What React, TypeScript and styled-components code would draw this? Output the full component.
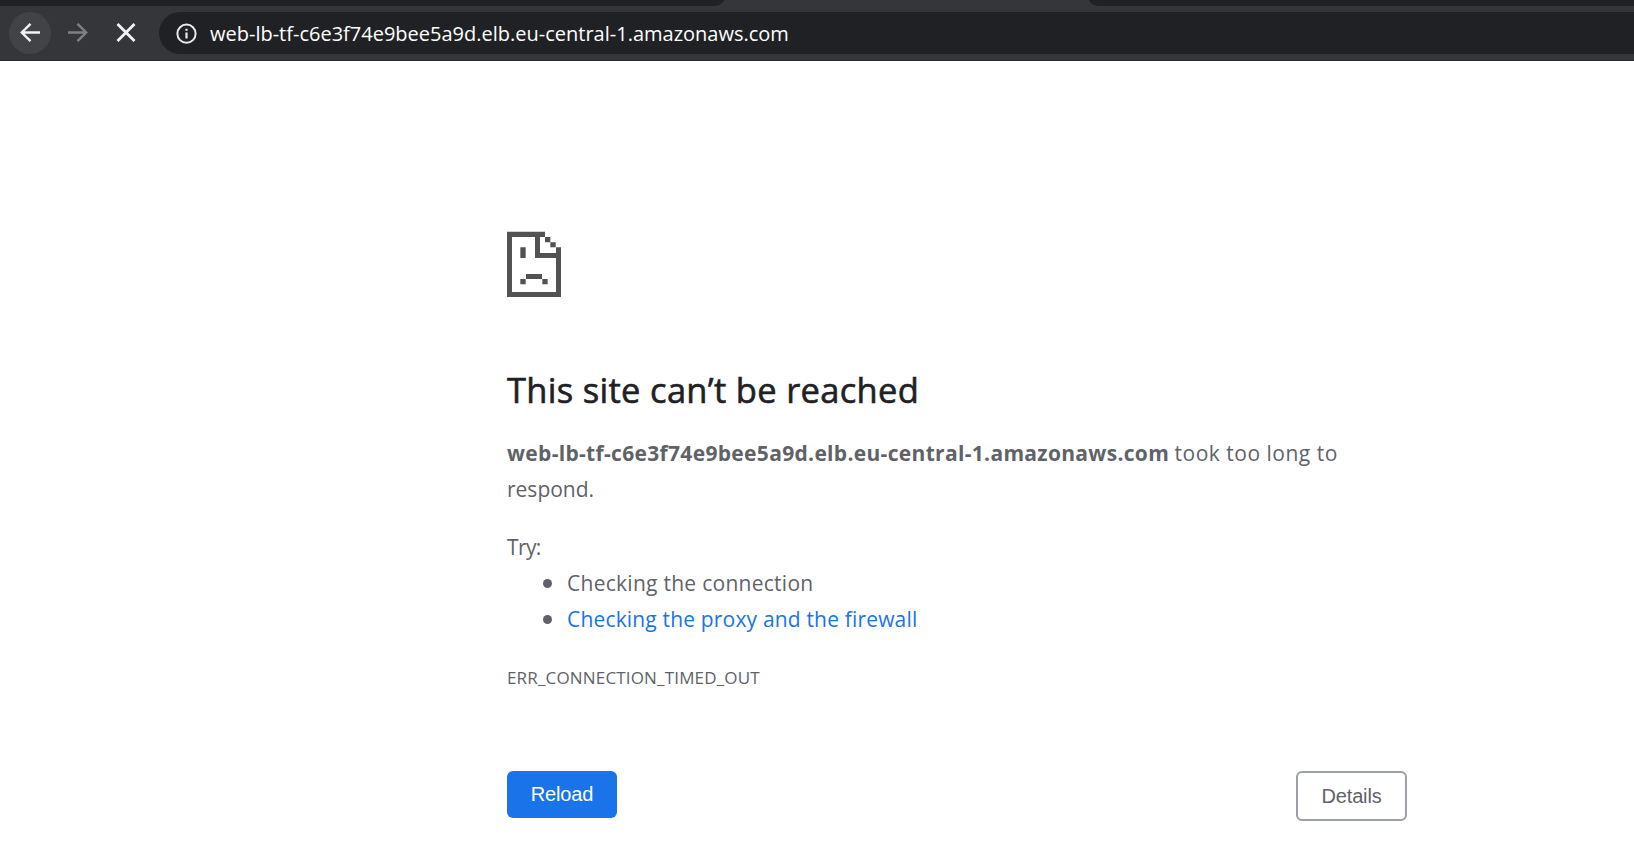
import React from 'react';
import styled, { createGlobalStyle } from 'styled-components';

const GlobalStyle = createGlobalStyle`
  * { box-sizing: border-box; }
  body {
    margin: 0;
    background: #fff;
    color: #5f6368;
    font-family: "Open Sans", "Noto Sans", sans-serif;
    overflow: hidden;
  }
`;

const Browser = styled.div`
  height: 855px;
  display: flex;
  flex-direction: column;
`;

const TabStrip = styled.div`
  height: 6px;
  flex: none;
  display: flex;
  align-items: flex-end;
  justify-content: space-between;
  overflow: hidden;
  background: #35363a;
`;

const TabGroup = styled.div<{ $side: 'left' | 'right'; $width: number }>`
  width: ${(p) => p.$width}px;
  height: 24px;
  background: #202124;
  border-radius: ${(p) => (p.$side === 'left' ? '0 0 12px 0' : '0 0 0 12px')};
`;

const Toolbar = styled.header`
  height: 55px;
  flex: none;
  display: flex;
  align-items: flex-start;
  gap: 6px;
  padding: 6px 0 0 9px;
  background: #35363a;
  border-bottom: 1px solid #28292c;
`;

const NavButton = styled.button<{ $active?: boolean; $dim?: boolean }>`
  width: 42px;
  height: 42px;
  padding: 0;
  border: 0;
  border-radius: 50%;
  background: ${(p) => (p.$active ? '#424347' : 'transparent')};
  color: ${(p) => (p.$dim ? '#7f8083' : '#f1f3f4')};
  svg { display: block; }
`;

const Omnibox = styled.div`
  flex: 1;
  height: 42px;
  margin-left: 6px;
  padding-left: 17px;
  display: flex;
  align-items: center;
  gap: 13px;
  border-radius: 21px 0 0 21px;
  background: #202124;
  color: #fff;
`;

const Address = styled.span`
  padding-top: 2px;
  font-size: 20px;
  line-height: 42px;
  white-space: nowrap;
`;

const ErrorPage = styled.main`
  width: 900px;
  margin-left: 507px;
  padding-top: 170px;
  font-size: 21px;
  line-height: 36px;
`;

const SadPage = styled.svg`
  display: block;
  width: 54px;
  height: 66px;
  fill: #525252;
`;

const Title = styled.h1`
  margin: 69px 0 0;
  color: #202124;
  font-size: 34.5px;
  font-weight: 500;
  line-height: 48px;
  white-space: nowrap;
  -webkit-text-stroke: 0.6px #202124;
`;

const Summary = styled.p`
  margin: 21px 0 0;
  strong { font-weight: 700; }
`;

const Line = styled.span<{ $track?: number }>`
  letter-spacing: ${(p) => p.$track ?? 0}px;
  white-space: nowrap;
`;

const Suggestions = styled.div`
  margin-top: 22px;
`;

const TipList = styled.ul`
  margin: 0;
  padding: 0 0 0 24px;
  list-style: none;
`;

const Tip = styled.li<{ $link?: boolean }>`
  display: flex;
  align-items: center;
  gap: 15px;
  padding-left: 12px;
  height: 36px;
  color: ${(p) => (p.$link ? '#1a73e8' : 'inherit')};
  &::before {
    content: '';
    width: 9px;
    height: 9px;
    border-radius: 50%;
    background: #5f6368;
  }
`;

const ErrorCode = styled.div`
  margin-top: 23px;
  font-size: 17px;
`;

const Actions = styled.div`
  margin-top: 75px;
  display: flex;
  justify-content: space-between;
  align-items: flex-start;
`;

const Button = styled.button<{ $outline?: boolean }>`
  width: ${(p) => (p.$outline ? 111 : 110)}px;
  height: ${(p) => (p.$outline ? 50 : 47)}px;
  padding: ${(p) => (p.$outline ? '0' : '0 0 2px')};
  border: ${(p) => (p.$outline ? '2px solid #9aa0a6' : '0')};
  border-radius: 6px;
  background: ${(p) => (p.$outline ? '#fff' : '#1a73e8')};
  color: ${(p) => (p.$outline ? '#5f6368' : '#fff')};
  font: 20px/30px "Liberation Sans", Arial, sans-serif;
  letter-spacing: -0.15px;
`;

const HOST = 'web-lb-tf-c6e3f74e9bee5a9d.elb.eu-central-1.amazonaws.com';

function Stroke({ d, width = 2.4 }: { d: string; width?: number }) {
  return (
    <svg width="42" height="42" viewBox="0 0 42 42" fill="none" stroke="currentColor" strokeWidth={width}>
      <path d={d} />
    </svg>
  );
}

export default function App() {
  return (
    <Browser>
      <GlobalStyle />
      <TabStrip>
        <TabGroup $side="left" $width={726} />
        <TabGroup $side="right" $width={547} />
      </TabStrip>
      <Toolbar>
        <NavButton $active aria-label="Back">
          <Stroke d="M31 20.5H13M21.5 11.8L12.8 20.5L21.5 29.2" />
        </NavButton>
        <NavButton $dim aria-label="Forward">
          <Stroke d="M11 20.5H29M20.5 11.8L29.2 20.5L20.5 29.2" />
        </NavButton>
        <NavButton aria-label="Stop">
          <Stroke width={2.8} d="M12.5 12L29.5 29M29.5 12L12.5 29" />
        </NavButton>
        <Omnibox>
          <svg width="21" height="21" viewBox="0 0 21 21" fill="none" stroke="#e8eaed" strokeWidth="2">
            <circle cx="10.5" cy="10.7" r="9.1" />
            <path d="M10.5 9.6V15.6M10.5 5.7V7.8" strokeWidth="2.2" />
          </svg>
          <Address>{HOST}</Address>
        </Omnibox>
      </Toolbar>
      <ErrorPage>
        <SadPage viewBox="0 0 162 198">
          <path d="M0 2H114V18H15V183H147V81H84V18H99V66H147V49H162V198H0Z" />
          <path d="M114 18h16v16h-16zM130 34h16v15h-16zM40 49h16v32h-16zM57 129h48v15h-48zM40 144h16v16h-16zM106 144h16v16h-16z" />
        </SadPage>
        <Title><Line $track={0.3}>This site can’t be reached</Line></Title>
        <Summary>
          <strong><Line $track={0.32}>{HOST}</Line></strong> <Line $track={0.5}>took too long to</Line>
          <br />
          <Line>respond.</Line>
        </Summary>
        <Suggestions>
          <Line $track={-0.6}>Try:</Line>
          <TipList>
            <Tip><Line $track={0.27}>Checking the connection</Line></Tip>
            <Tip $link><Line $track={0.17}>Checking the proxy and the firewall</Line></Tip>
          </TipList>
        </Suggestions>
        <ErrorCode><Line $track={0.17}>ERR_CONNECTION_TIMED_OUT</Line></ErrorCode>
        <Actions>
          <Button>Reload</Button>
          <Button $outline>Details</Button>
        </Actions>
      </ErrorPage>
    </Browser>
  );
}
